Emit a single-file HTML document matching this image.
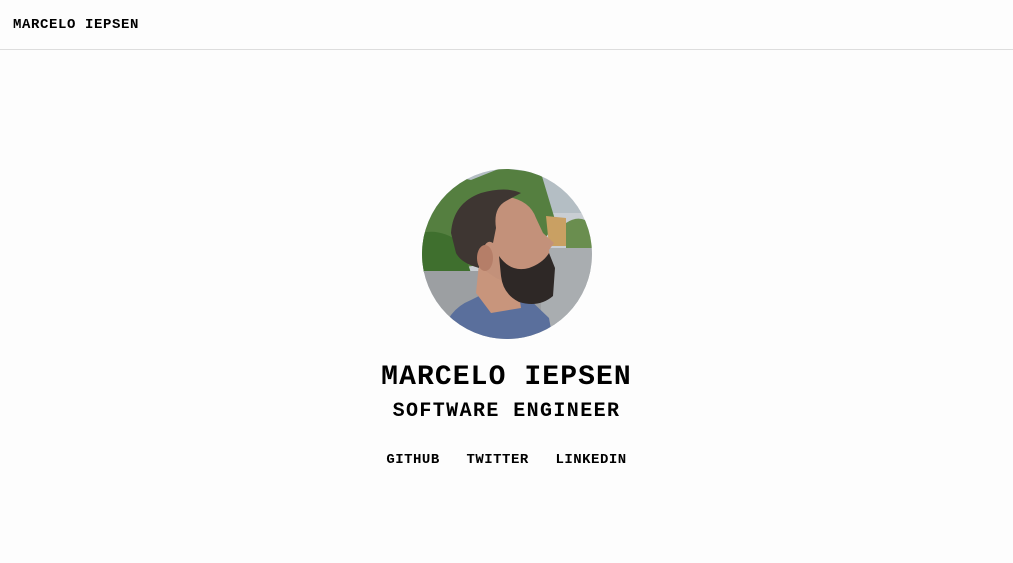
<!DOCTYPE html>
<html><head><style>
body{margin:0;background:#fdfdfd;font-family:"Liberation Mono",monospace;font-weight:bold;color:#000;width:1013px;height:563px;overflow:hidden;position:relative}
.hdr{position:absolute;left:0;top:0;width:1013px;height:49px;border-bottom:1px solid #ddd}
.hdr span{position:absolute;left:13px;top:17px;font-size:14px;letter-spacing:0.6px}
.c{position:absolute;left:0;width:1013px;text-align:center;white-space:nowrap}
svg{position:absolute;left:421px;top:168px}
</style></head><body>
<div class="hdr"><span>MARCELO IEPSEN</span></div>
<svg width="172" height="172" viewBox="0 0 172 172">
<defs><clipPath id="cp"><circle cx="86" cy="86" r="85"/></clipPath></defs>
<g clip-path="url(#cp)">
<rect width="172" height="172" fill="#c9ced3"/>
<rect x="0" y="0" width="172" height="45" fill="#b4bec4"/>
<path d="M0 20 Q20 5 50 12 L80 0 L120 5 L135 55 L110 90 L0 105Z" fill="#557f40"/>
<path d="M0 65 Q20 60 40 75 L50 105 L0 105Z" fill="#3f6f2e"/>
<path d="M125 48 L145 50 L145 78 L128 78Z" fill="#c9a063"/>
<path d="M145 55 Q160 45 172 58 L172 80 L145 80Z" fill="#6a8e4f"/>
<rect x="0" y="103" width="172" height="70" fill="#9c9fa2"/>
<rect x="120" y="80" width="52" height="90" fill="#a9adb0"/>
<path d="M20 172 Q25 142 50 132 L70 122 L105 128 L128 150 L132 172Z" fill="#5a6f9c"/>
<path d="M55 125 L58 95 L95 105 L100 140 L70 145Z" fill="#c8957c"/>
<path d="M50 60 Q55 30 80 28 Q108 30 115 50 L122 65 L133 75 L128 82 L130 100 Q120 120 100 120 L75 110 L60 100Z" fill="#c3917a"/>
<path d="M30 65 Q32 35 60 25 Q85 18 100 25 L85 33 Q72 40 75 60 L72 75 Q62 68 58 100 Q40 95 35 85Z" fill="#3e3632"/>
<path d="M78 88 Q90 105 108 100 Q122 95 128 85 L134 100 L132 128 Q118 140 98 134 Q82 126 80 108Z" fill="#2e2826"/>
<ellipse cx="64" cy="90" rx="8" ry="13" fill="#b57e68"/>
</g></svg>
<div class="c" style="top:362px;font-size:28px;letter-spacing:1.1px">MARCELO IEPSEN</div>
<div class="c" style="top:400px;font-size:20px;letter-spacing:1.4px">SOFTWARE ENGINEER</div>
<div class="c" style="top:452px;font-size:14px;letter-spacing:0.5px">GITHUB &nbsp;&nbsp;TWITTER &nbsp;&nbsp;LINKEDIN</div>
</body></html>
